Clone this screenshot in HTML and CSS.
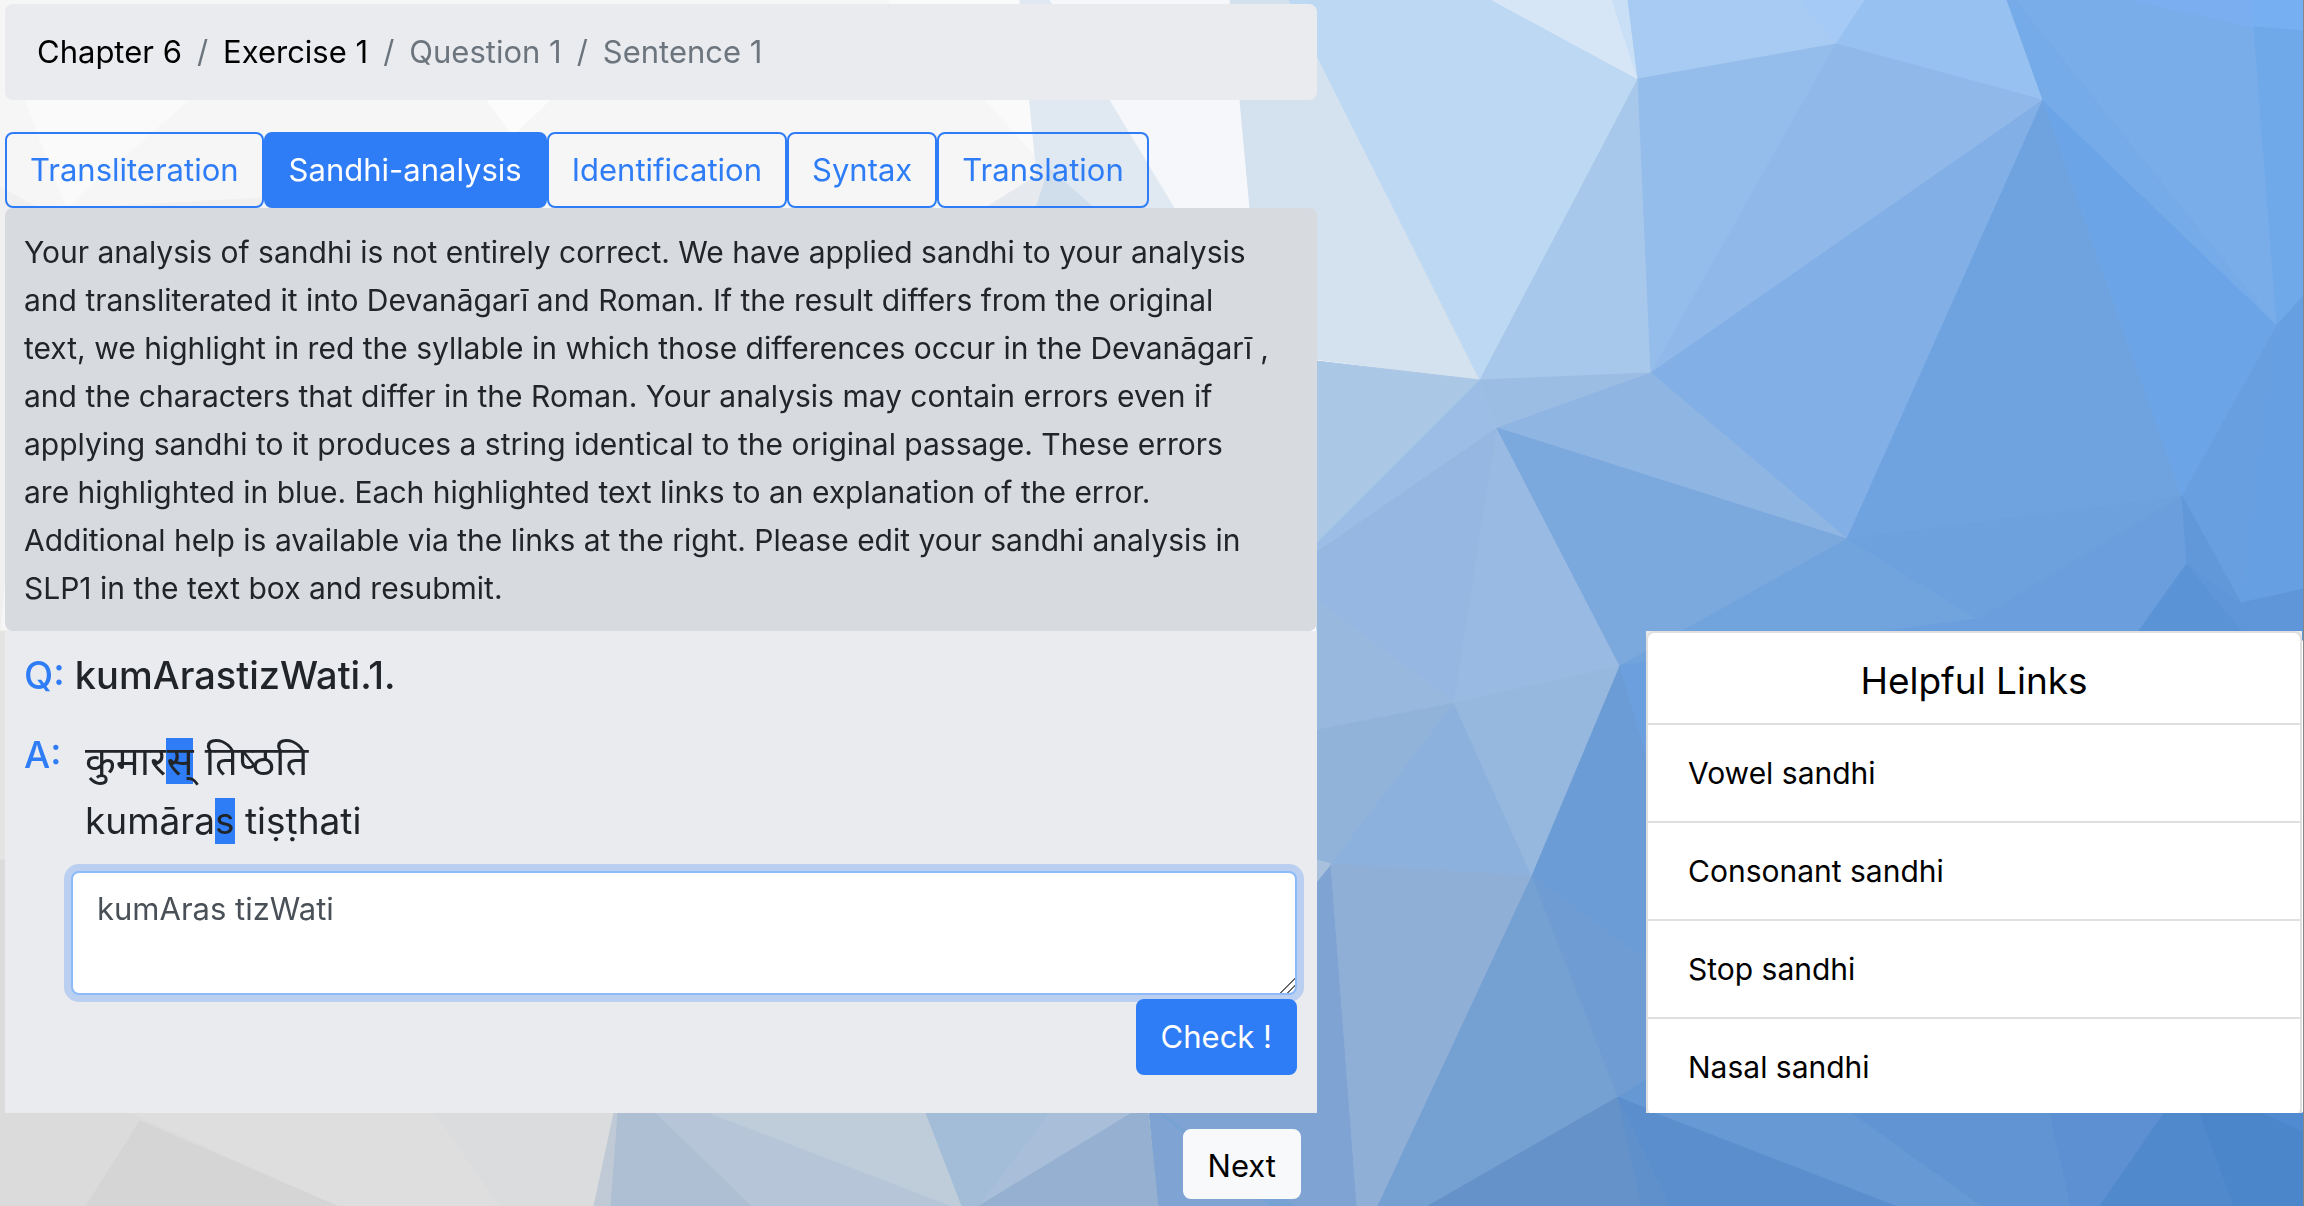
FILE: index.html
```
<!DOCTYPE html>
<html lang="en">
<head>
<meta charset="utf-8">
<meta name="viewport" content="width=device-width, initial-scale=1">
<title>Sandhi-analysis</title>
<link rel="stylesheet" href="styles.css">
</head>
<body>
<svg class="backdrop" viewBox="0 0 2304 1206" preserveAspectRatio="none" aria-hidden="true">
  <!-- pale left side -->
  <polygon color="#f6f6f6" points="0,0 1240,0 1250,208 1250,631 0,631"/>
  <polygon color="#e4e4e2" points="0,631 1250,631 1250,860 0,860"/>
  <polygon color="#dbdbdb" points="0,860 1250,860 1250,1206 0,1206"/>
  <polygon color="#fafafa" points="25,100 189,100 66,208"/>
  <polygon color="#f0f0f0" points="0,187 38,208 0,631"/>
  <polygon color="#f0f0f0" points="80,208 262,198 262,208"/>
  <polygon color="#fcfcfc" points="480,90 560,90 513,136"/>
  <polygon color="#fafafa" points="888,0 1020,0 1037,100 1049,170 985,100"/>
  <polygon color="#e0e9f1" points="1020,0 1050,0 1110,100 1175,208 1040,208"/>
  <polygon color="#e6eaee" points="1049,168 985,208 1036,208"/>
  <polygon color="#d0deeb" points="1049,168 1036,208 1094,208"/>
  <polygon color="#f5f7fa" points="1050,0 1230,0 1240,100 1250,208 1175,208 1110,100"/>
  <!-- upper right -->
  <polygon color="#d4e1ee" points="1230,0 1289,0 1480,380 1250,351 1250,208 1240,100"/>
  <polygon color="#bdd8f2" points="1289,0 1492,0 1638,79 1480,380"/>
  <polygon color="#d7e6f7" points="1492,0 1612,0 1638,79"/>
  <polygon color="#c8dff6" points="1612,0 1628,0 1638,79"/>
  <polygon color="#a7cbf2" points="1628,0 1799,0 1836,44 1638,79"/>
  <polygon color="#a5caf6" points="1799,0 1865,0 1836,44"/>
  <polygon color="#97c1f0" points="1865,0 2007,0 2043,100 1836,44"/>
  <polygon color="#a7c8ea" points="1638,79 1651,373 1480,380"/>
  <polygon color="#95bdeb" points="1638,79 1836,44 1651,373"/>
  <polygon color="#90b9ea" points="1836,44 2043,100 1651,373"/>
  <polygon color="#81afe6" points="1651,373 2043,100 1847,539"/>
  <polygon color="#6fa3e0" points="2043,100 2182,496 1847,539"/>
  <polygon color="#6ca5e7" points="2043,100 2277,325 2182,496"/>
  <polygon color="#75abe8" points="2007,0 2017,0 2277,325 2043,100"/>
  <polygon color="#79ade9" points="2017,0 2132,0 2254,27 2277,325"/>
  <polygon color="#7aaef1" points="2132,0 2253,0 2254,27"/>
  <polygon color="#76aff2" points="2253,0 2304,0 2304,31 2254,27"/>
  <polygon color="#6fa9e9" points="2254,27 2304,31 2304,295 2277,325"/>
  <polygon color="#689fe0" points="2277,325 2241,603 2182,496"/>
  <polygon color="#66a0e2" points="2277,325 2304,295 2304,589 2241,603"/>
  <!-- middle band -->
  <polygon color="#abc7e6" points="1317,361 1480,380 1317,543"/>
  <polygon color="#9cbee6" points="1480,380 1497,428 1317,552 1317,543"/>
  <polygon color="#9cbde3" points="1480,380 1651,373 1497,428"/>
  <polygon color="#8fb5e3" points="1651,373 1847,539 1497,428"/>
  <polygon color="#95b7e1" points="1497,428 1454,703 1317,601 1317,552"/>
  <polygon color="#99bae2" points="1497,428 1620,666 1454,703"/>
  <polygon color="#7ba8dd" points="1497,428 1847,539 1620,666"/>
  <polygon color="#71a3dd" points="1847,539 1977,619 1620,666"/>
  <polygon color="#6da1de" points="1847,539 2182,496 1977,619"/>
  <polygon color="#6b9edd" points="2182,496 2187,563 2132,640 1970,640 1977,619"/>
  <polygon color="#5b94d6" points="2187,563 2250,640 2132,640"/>
  <polygon color="#6098da" points="2182,496 2241,603 2187,563"/>
  <polygon color="#5e96d9" points="2187,563 2241,603 2304,589 2304,640 2250,640"/>
  <polygon color="#6b9edd" points="1620,666 1977,619 1970,640 1646,680"/>
  <polygon color="#98b8de" points="1317,601 1454,703 1317,730"/>
  <polygon color="#91b3da" points="1317,730 1454,703 1331,864 1317,860"/>
  <polygon color="#8cb1dd" points="1454,703 1532,876 1331,864"/>
  <polygon color="#96b8df" points="1454,703 1620,666 1532,876"/>
  <polygon color="#6b9cd5" points="1620,666 1646,754 1646,961 1532,876"/>
  <polygon color="#6c9fdd" points="1620,666 1660,660 1660,790 1646,754"/>
  <!-- lower right -->
  <polygon color="#7fa3d2" points="1331,864 1357,1206 1158,1206 1148,1100 1300,900"/>
  <polygon color="#a8c0dc" points="1310,858 1331,864 1310,890"/>
  <polygon color="#76a3d4" points="1160,1113 1295,1206 1270,1206"/>
  <polygon color="#8fafd7" points="1331,864 1532,876 1378,1206 1357,1206"/>
  <polygon color="#75a0d2" points="1532,876 1618,1097 1428,1206 1378,1206"/>
  <polygon color="#6f9dd3" points="1532,876 1660,971 1660,1070 1618,1097"/>
  <polygon color="#6699d4" points="1618,1097 1660,1070 1660,1115"/>
  <polygon color="#6492c9" points="1618,1097 1642,1206 1428,1206"/>
  <polygon color="#5f90cc" points="1618,1097 1670,1206 1642,1206"/>
  <polygon color="#5b8ecd" points="1618,1097 1657,1113 1898,1206 1670,1206"/>
  <polygon color="#6799d4" points="1657,1113 1852,1113 1982,1206 1898,1206"/>
  <polygon color="#6094d2" points="1852,1113 2050,1113 2071,1206 1982,1206"/>
  <polygon color="#5c90d3" points="2050,1113 2164,1113 2100,1206 2071,1206"/>
  <polygon color="#5089cc" points="2164,1113 2200,1113 2234,1206 2100,1206"/>
  <polygon color="#4b86ca" points="2200,1113 2304,1113 2304,1206 2234,1206"/>
  <polygon color="#508ad0" points="2263,1113 2304,1113 2304,1132"/>
  <!-- lower left -->
  <polygon color="#dedede" points="132,1113 435,1113 500,1206 337,1206"/>
  <polygon color="#d5d5d5" points="140,1121 86,1206 337,1206"/>
  <polygon color="#dadcde" points="435,1113 614,1113 594,1206 500,1206"/>
  <polygon color="#c0cad6" points="614,1113 618,1113 611,1206 594,1206"/>
  <polygon color="#aebfd3" points="618,1113 656,1113 752,1206 611,1206"/>
  <polygon color="#b6c5d7" points="656,1113 710,1113 952,1206 752,1206"/>
  <polygon color="#bfcdda" points="710,1113 926,1113 962,1206 952,1206"/>
  <polygon color="#a3bdd8" points="926,1113 1050,1113 979,1206 962,1206"/>
  <polygon color="#a8bed9" points="1050,1113 1132,1113 979,1206"/>
  <polygon color="#95b0d0" points="1132,1113 1148,1113 1158,1206 979,1206"/>
</svg>

<div class="page">
  <main class="exercise">
    <nav aria-label="Breadcrumb">
      <ol class="breadcrumb">
        <li><a href="#chapter">Chapter 6</a></li>
        <li><a href="#exercise">Exercise 1</a></li>
        <li>Question 1</li>
        <li>Sentence 1</li>
      </ol>
    </nav>
    <div class="tabs">
      <button type="button" class="btn">Transliteration</button>
      <button type="button" class="btn active">Sandhi-analysis</button>
      <button type="button" class="btn">Identification</button>
      <button type="button" class="btn">Syntax</button>
      <button type="button" class="btn">Translation</button>
    </div>
    <p class="alert">Your analysis of sandhi is not entirely correct. We have applied sandhi to your analysis<br>
      and transliterated it into Devanāgarī and Roman. If the result differs from the original<br>
      text, we highlight in red the syllable in which those differences occur in the Devanāgarī ,<br>
      and the characters that differ in the Roman. Your analysis may contain errors even if<br>
      applying sandhi to it produces a string identical to the original passage. These errors<br>
      are highlighted in blue. Each highlighted text links to an explanation of the error.<br>
      Additional help is available via the links at the right. Please edit your sandhi analysis in<br>
      SLP1 in the text box and resubmit.</p>
  </main>

  <form class="card">
    <h2 class="question"><span class="mark">Q:</span> kumArastizWati.1.</h2>
    <div class="answer">
      <label class="mark" for="analysis">A:</label>
      <div class="result">
        <p lang="sa">कुमार<a href="#s" class="hit">स्</a> तिष्‍ठति</p>
        <p>kumāra<a href="#s" class="hit">s</a> tiṣṭhati</p>
      </div>
    </div>
    <textarea id="analysis" class="entry">kumAras tizWati</textarea>
    <button type="button" class="btn active check">Check !</button>
  </form>

  <aside class="links">
    <div class="links-box">
      <h2>Helpful Links</h2>
      <ul>
        <li><a href="#vowel">Vowel sandhi</a></li>
        <li><a href="#consonant">Consonant sandhi</a></li>
        <li><a href="#stop">Stop sandhi</a></li>
        <li><a href="#nasal">Nasal sandhi</a></li>
      </ul>
    </div>
  </aside>

  <div class="pager"><button type="button" class="btn next">Next</button></div>
</div>
</body>
</html>
```
FILE: styles.css
```
* { box-sizing: border-box; }

body {
  margin: 0;
  font: 30px/48px Inter, "Noto Sans", sans-serif;
  color: #212529;
}

h2, p, ul, ol { margin: 0; padding: 0; }
ul, ol { list-style: none; }
a { color: inherit; text-decoration: none; }

.backdrop {
  position: fixed;
  inset: 0;
  z-index: -1;
  width: 100%;
  height: 100%;
}
.backdrop polygon { fill: currentColor; stroke: currentColor; }

.page {
  display: grid;
  grid-template-columns: 1312fr 329fr 656fr;
  min-height: 100vh;
  grid-template-rows: auto auto 1fr;
  padding: 4px 1px 0 5px;
  border-right: 1px solid #868686;
}

.breadcrumb {
  display: flex;
  padding: 24px 32px;
  background: #eaebef;
  border-radius: 8px;
  color: #6c757d;
  font-size: 31px;
}
.breadcrumb a { color: #000; }
.breadcrumb li + li::before {
  content: "/";
  padding: 0 15px;
  color: #6c757d;
}

.btn {
  height: 76px;
  padding: 0 23px;
  border: 2px solid #2f7df6;
  border-radius: 8px;
  background: transparent;
  color: #2f7df6;
  font: inherit;
  font-size: 31px;
}
.btn.active { background: #2f7df6; color: #fff; }

.tabs { display: flex; margin-top: 32px; }

.alert {
  padding: 20px 0 19px 19px;
  background: #d7dadf;
  border-radius: 8px;
  white-space: nowrap;
}

.exercise, .card, .pager { grid-column: 1; }

.card {
  display: flex;
  flex-direction: column;
  padding: 20px 20px 38px 19px;
  background: #eaebef;
}
.mark { color: #2f7df6; font-weight: 500; }
.question { font-size: 38px; font-weight: 500; }
.answer {
  display: grid;
  grid-template-columns: 61px 1fr;
  margin-top: 32px;
  font-size: 37px;
}
.result p { line-height: 60px; }
.result p:lang(sa) { font-size: 40px; }
.hit {
  display: inline-block;
  line-height: 46px;
  background: #2f7df6;
}
.entry {
  height: 124px;
  margin: 20px 0 4px 47px;
  padding: 12px 24px;
  border: 2px solid #8dbaf9;
  border-radius: 8px;
  outline: 0;
  box-shadow: 0 0 0 7px #bbcff0;
  background: #fff;
  color: #495057;
  font: inherit;
  font-size: 31px;
  resize: vertical;
}
.entry::-webkit-resizer {
  background: linear-gradient(135deg, transparent 48%, #666 48%, #666 56%, transparent 56%, transparent 72%, #666 72%, #666 80%, transparent 80%);
}
.check { align-self: flex-end; position: relative; }

.links {
  grid-column: 3;
  grid-row: 2;
  height: 482px;
  overflow: hidden;
  background: #ebebeb;
}
.links-box {
  border: 2px solid #dfdfdf;
  border-radius: 8px;
  background: #fff;
  color: #000;
}
.links h2 {
  padding: 24px 0 18px;
  font-size: 37px;
  font-weight: 400;
  text-align: center;
}
.links li {
  padding: 24px 40px;
  border-top: 2px solid #dfdfdf;
}

.pager { padding: 16px 16px 7px; text-align: right; }
.next {
  height: 70px;
  padding-top: 4px;
  border-color: #f8f9fa;
  background: #f8f9fa;
  color: #000;
}
```
